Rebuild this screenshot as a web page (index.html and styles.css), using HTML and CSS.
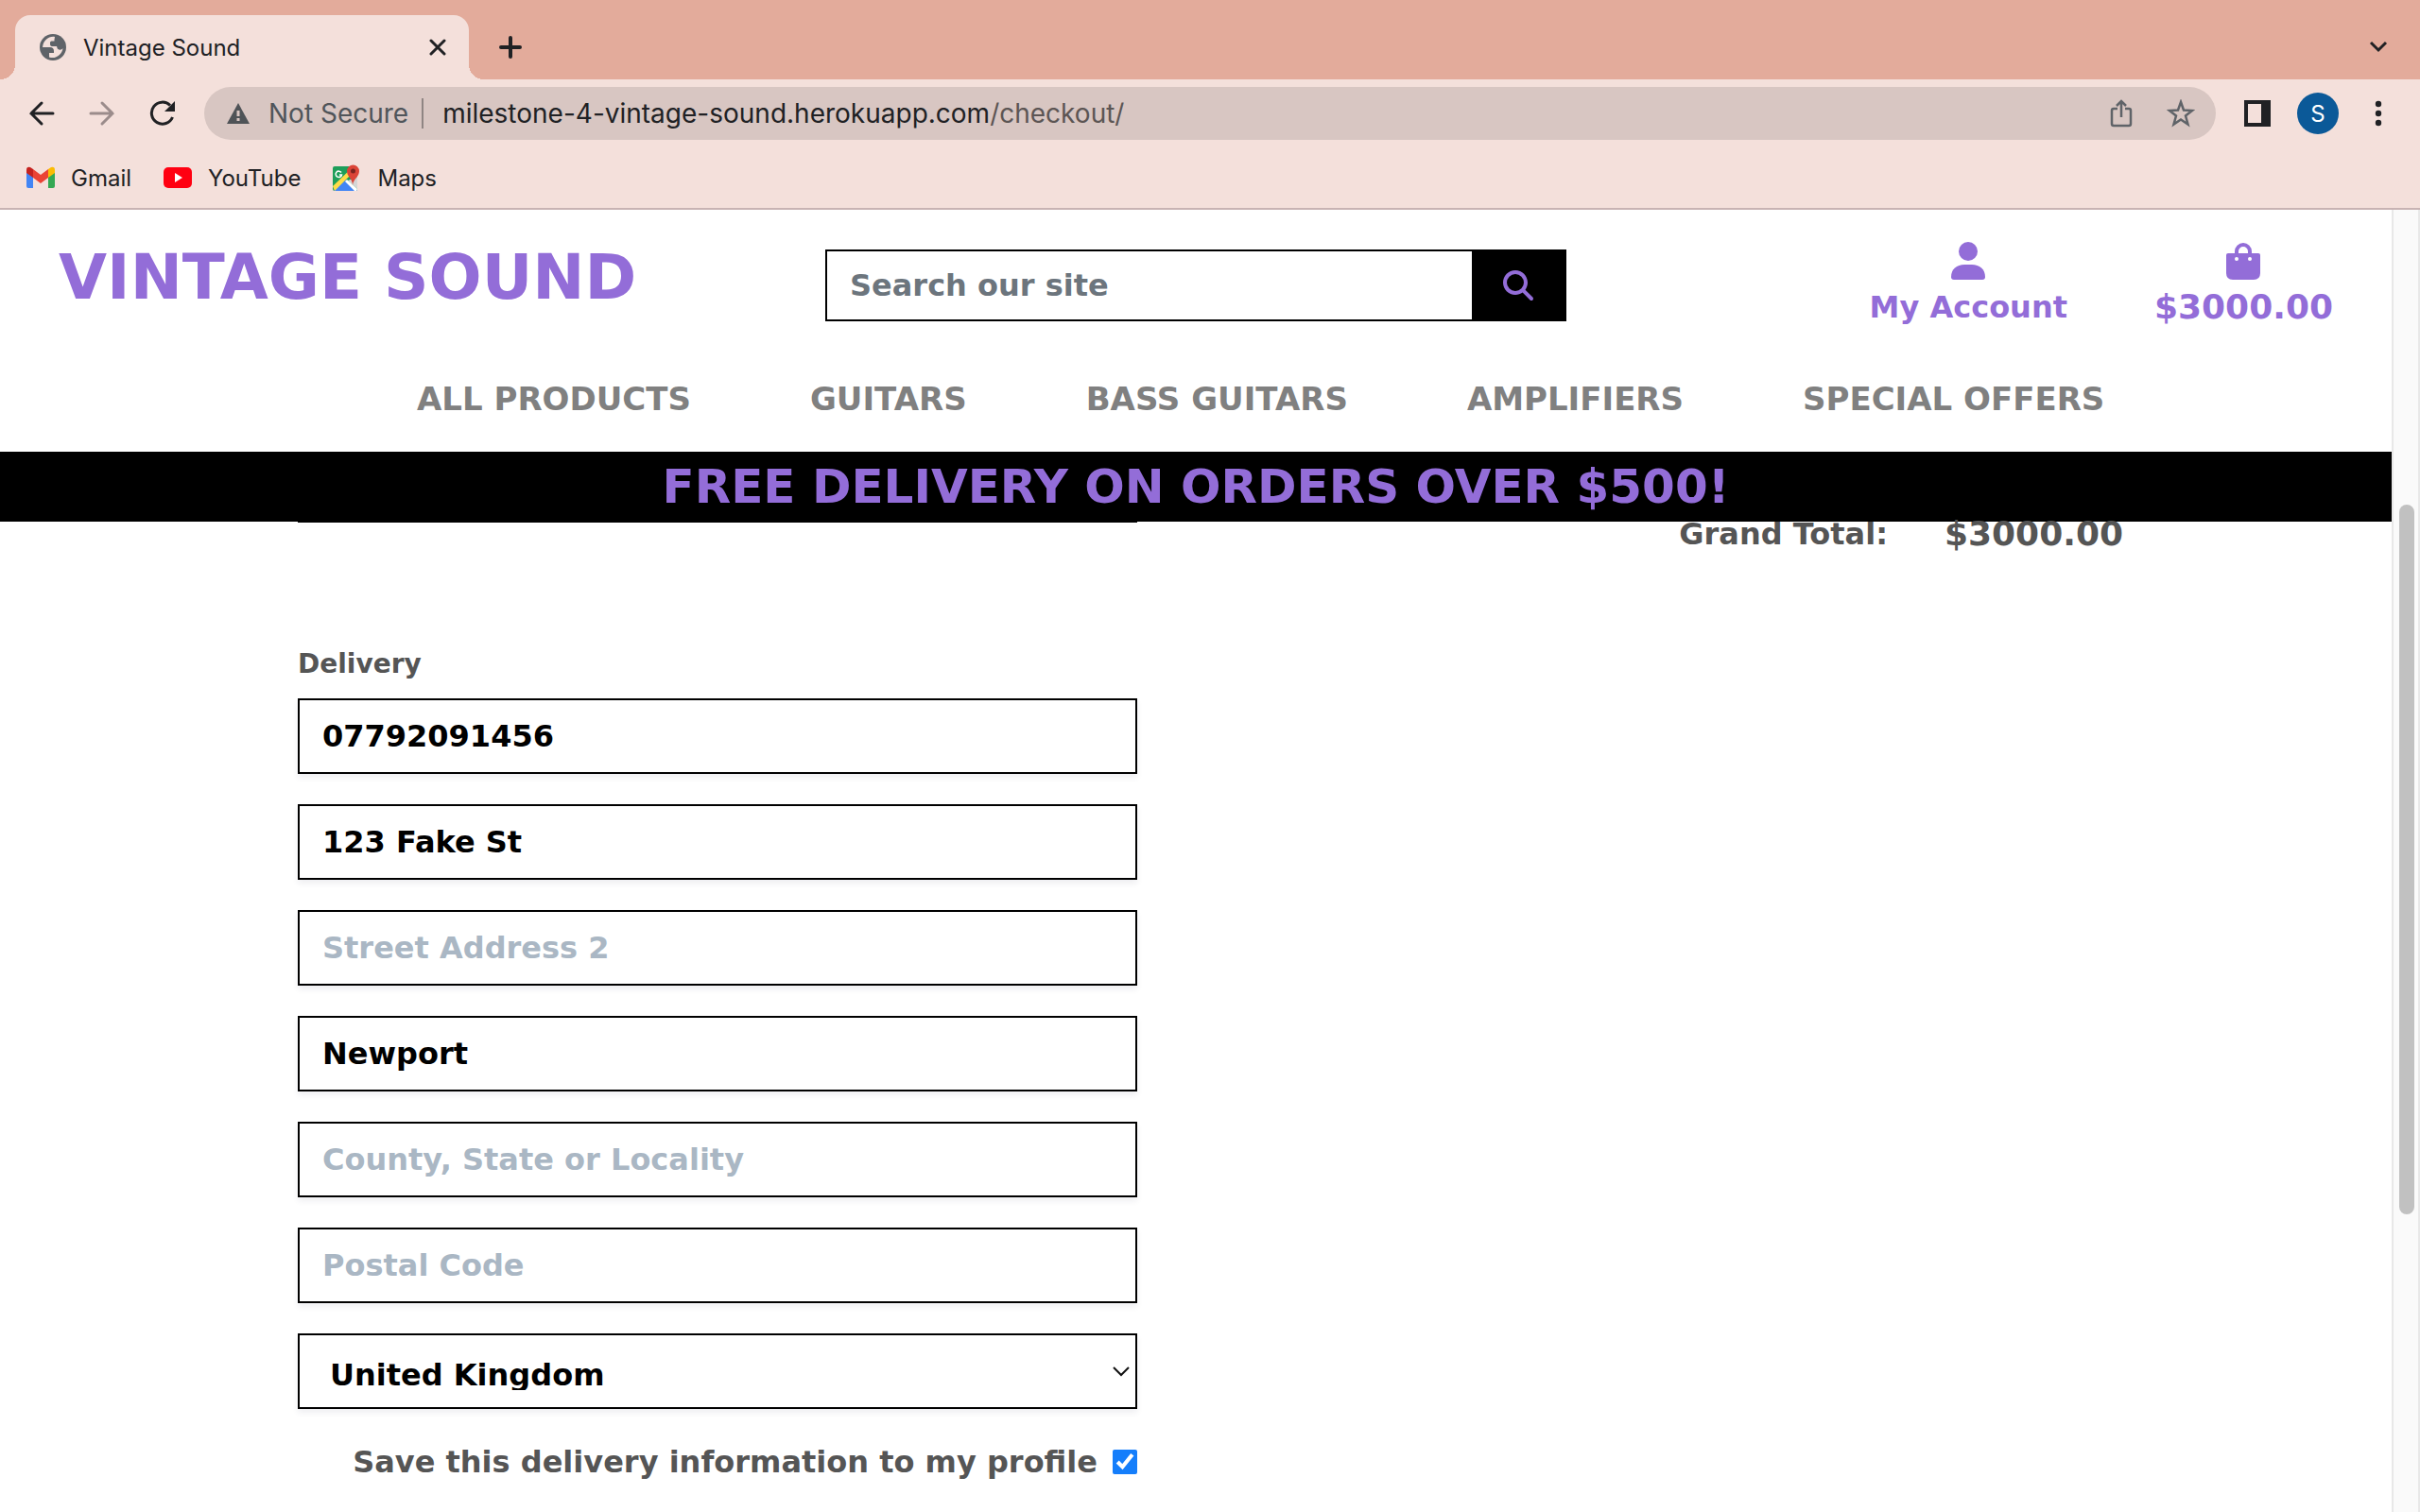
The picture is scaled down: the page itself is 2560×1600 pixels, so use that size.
FILE: index.html
```html
<!DOCTYPE html>
<html lang="en">
<head>
<meta charset="utf-8">
<title>Vintage Sound</title>
<meta name="viewport" content="width=device-width, initial-scale=1">
<link rel="stylesheet" href="styles.css">
</head>
<body>
<div class="window">
  <div class="chrome">
    <div class="tabstrip">
      <div class="tab">
        <svg class="globe" width="28" height="28" viewBox="0 0 28 28" aria-hidden="true"><circle cx="14" cy="14" r="14" fill="#5f6368"/><path d="M16 3C10 2 4 6 3 14h8c2.500 0 4 1.500 4 4v2h-5v4.500c7 2.500 14-3 14.500-9.500-1 1.500-2.500 2-4 1.500-2-.5-2-2-2.500-3.500h-5c-1.500 0-2-1-2-2.500V9c0-1 1-1.500 2-1.500h2.500V6c0-1 .5-2 .5-3z" fill="#f4e0db"/></svg>
        <span class="tab-title">Vintage Sound</span>
        <button class="icon-btn" aria-label="Close tab"><svg width="18" height="18" viewBox="0 0 18 18"><path d="M2 2l14 14M16 2L2 16" stroke="#202124" stroke-width="3" stroke-linecap="round"/></svg></button>
      </div>
      <button class="icon-btn" aria-label="New tab"><svg width="24" height="24" viewBox="0 0 24 24"><path d="M12 2v20M2 12h20" stroke="#202124" stroke-width="4" stroke-linecap="round"/></svg></button>
      <button class="icon-btn tab-search" aria-label="Search tabs"><svg width="20" height="14" viewBox="0 0 20 14"><path d="M2 2l8 8 8-8" fill="none" stroke="#202124" stroke-width="3"/></svg></button>
    </div>
    <div class="toolbar">
      <div class="history">
        <button class="icon-btn" aria-label="Back"><svg width="28" height="28" viewBox="0 0 28 28"><path d="M26 14H3M14 3L3 14l11 11" fill="none" stroke="#202124" stroke-width="3" stroke-linecap="round"/></svg></button>
        <button class="icon-btn" aria-label="Forward"><svg width="28" height="28" viewBox="0 0 28 28"><path d="M2 14h23M14 3l11 11-11 11" fill="none" stroke="#9b8c8b" stroke-width="3" stroke-linecap="round"/></svg></button>
        <button class="icon-btn" aria-label="Reload"><svg width="28" height="28" viewBox="0 0 28 28"><path d="M24.500 18A11.500 11.500 0 1 1 22 5.500" fill="none" stroke="#202124" stroke-width="3"/><path d="M27 1v11H16z" fill="#202124"/></svg></button>
      </div>
      <div class="omnibox">
        <svg width="24" height="24" viewBox="0 0 24 24" aria-hidden="true"><path d="M12 1l12 22H0z" fill="#4f5357"/><path d="M12 9v6M12 17v3" stroke="#d8c6c2" stroke-width="3"/></svg>
        <span class="secure">Not Secure</span>
        <span class="url">milestone-4-vintage-sound.herokuapp.com<span class="path">/checkout/</span></span>
        <button class="icon-btn" aria-label="Share"><svg width="24" height="30" viewBox="0 0 24 30"><path d="M8 10H4q-2 0-2 2v14q0 2 2 2h16q2 0 2-2V12q0-2-2-2h-4M12 19V3M7 7l5-5 5 5" fill="none" stroke="#5f6368" stroke-width="2.500"/></svg></button>
        <button class="icon-btn" aria-label="Bookmark this page"><svg width="30" height="30" viewBox="0 0 30 30"><path d="M15 3l3 8.500 9 .5-7 5.500 2.500 9L15 21.500l-7.500 5 2.500-9L3 12l9-.5z" fill="none" stroke="#5f6368" stroke-width="2.500"/></svg></button>
      </div>
      <button class="icon-btn" aria-label="Side panel"><svg width="28" height="28" viewBox="0 0 28 28"><path d="M0 0h28v28H0zM4 4v20h14V4z" fill="#202124" fill-rule="evenodd"/></svg></button>
      <button class="avatar">S</button>
      <button class="icon-btn" aria-label="Menu"><svg width="8" height="28" viewBox="0 0 8 28"><g fill="#202124"><circle cx="4" cy="4" r="3.200"/><circle cx="4" cy="14" r="3.200"/><circle cx="4" cy="24" r="3.200"/></g></svg></button>
    </div>
    <div class="bookmarks">
      <a href="#"><svg width="30" height="24" viewBox="0 0 30 24" aria-hidden="true"><path d="M0 4l7 5v14H2q-2 0-2-2z" fill="#4285f4"/><path d="M30 4l-7 5v14h5q2 0 2-2z" fill="#34a853"/><path d="M7 3l8 6 8-6v9l-8 6-8-6z" fill="#ea4335"/><path d="M0 4q0-4 4-3l3 2v9L0 7z" fill="#c5221f"/><path d="M30 4q0-4-4-3l-3 2v9l7-5z" fill="#fbbc04"/></svg>Gmail</a>
      <a href="#"><svg width="30" height="22" viewBox="0 0 30 22" aria-hidden="true"><rect width="30" height="22" rx="5" fill="#f01"/><path d="M12 6l8 5-8 5z" fill="#fff"/></svg>YouTube</a>
      <a href="#"><svg width="30" height="30" viewBox="0 0 30 30" aria-hidden="true"><rect y="3" width="26" height="26" rx="2" fill="#1e9e5a"/><path d="M1 29l13-12 12 12z" fill="#4285f4"/><path d="M26 14v13L16 18z" fill="#d5d5d5"/><path d="M0 24L21 4l3 3L2 29z" fill="#ffdc48"/><path d="M15 17l11 10-1 2h-2L13 19z" fill="#fff"/><path d="M9 9.500A3.200 3.200 0 1 0 9.500 12H7" fill="none" stroke="#fff" stroke-width="1.500"/><path d="M21 23c0-7-6-9-6-15a6.500 6.500 0 0 1 13 0c0 6-6 8-7 15z" fill="#db4437"/><circle cx="21.500" cy="8" r="2.500" fill="#7b231e"/></svg>Maps</a>
    </div>
  </div>

  <div class="viewport">
    <div class="page">
      <header class="site-header">
        <div class="header-row">
          <a class="brand" href="#">VINTAGE SOUND</a>
          <form class="search">
            <input class="search-input" type="text" placeholder="Search our site" aria-label="Search our site">
            <button class="search-btn" type="button" aria-label="Search"><svg width="32" height="32" viewBox="0 0 512 512"><path fill="#936dd8" d="M416 208c0 45.900-14.900 88.300-40 122.700L502.600 457.400c12.500 12.500 12.500 32.800 0 45.300s-32.800 12.500-45.300 0L330.700 376c-34.400 25.200-76.800 40-122.700 40C93.100 416 0 322.900 0 208S93.100 0 208 0S416 93.100 416 208zM208 352a144 144 0 1 0 0-288 144 144 0 1 0 0 288z"/></svg></button>
          </form>
          <div class="account">
            <a class="account-link" href="#"><svg width="36" height="40" viewBox="0 0 36 40" aria-hidden="true"><circle cx="18" cy="10" r="10" fill="#936dd8"/><path d="M0 37c0-8 6-13 14-13h8c8 0 14 5 14 13q0 3-3 3H3q-3 0-3-3z" fill="#936dd8"/></svg>My Account</a>
            <a class="account-link amount" href="#"><svg width="36" height="40" viewBox="0 0 36 40" aria-hidden="true"><path d="M11 15V10a7 7 0 0 1 14 0v5" fill="none" stroke="#936dd8" stroke-width="4"/><path d="M2 12h32q2 0 2 2v19q0 7-7 7H7q-7 0-7-7V14q0-2 2-2z" fill="#936dd8"/><circle cx="11" cy="18" r="2" fill="#fff"/><circle cx="25" cy="18" r="2" fill="#fff"/></svg>$3000.00</a>
          </div>
        </div>
        <nav class="nav">
          <a href="#">ALL PRODUCTS</a><a href="#">GUITARS</a><a href="#">BASS GUITARS</a><a href="#">AMPLIFIERS</a><a href="#">SPECIAL OFFERS</a>
        </nav>
        <div class="banner">FREE DELIVERY ON ORDERS OVER $500!</div>
      </header>
      <main class="checkout">
        <form class="form">
          <div class="field-edge"></div>
          <fieldset class="delivery">
            <legend>Delivery</legend>
            <input class="field" type="tel" value="07792091456" aria-label="Phone Number">
            <input class="field" type="text" value="123 Fake St" aria-label="Street Address 1">
            <input class="field" type="text" placeholder="Street Address 2" aria-label="Street Address 2">
            <input class="field" type="text" value="Newport" aria-label="Town or City">
            <input class="field" type="text" placeholder="County, State or Locality" aria-label="County, State or Locality">
            <input class="field" type="text" placeholder="Postal Code" aria-label="Postal Code">
            <div class="select-wrap">
              <select class="field country" aria-label="Country"><option>United Kingdom</option></select>
              <svg class="chevron" width="20" height="12" viewBox="0 0 20 12" aria-hidden="true"><path d="M2 2l8 8 8-8" fill="none" stroke="#111" stroke-width="2"/></svg>
            </div>
          </fieldset>
          <div class="save">
            <label for="save-info">Save this delivery information to my profile</label>
            <input id="save-info" type="checkbox" checked>
          </div>
        </form>
        <div class="totals"><span>Grand Total:</span><strong class="amount">$3000.00</strong></div>
      </main>
    </div>
    <div class="scrollbar"><div class="thumb"></div></div>
  </div>
</div>
</body>
</html>
```
FILE: styles.css
```css
* { box-sizing: border-box; }
body { margin: 0; background: #fff; font-family: "DejaVu Sans", sans-serif; font-weight: 700; }
a { text-decoration: none; color: inherit; }
svg { display: block; flex: none; }
button { border: 0; padding: 0; background: none; font: inherit; }
.window { height: 100vh; display: flex; flex-direction: column; overflow: hidden; }

/* Browser frame */
.chrome { flex: none; background: #f4e0db; border-bottom: 2px solid #c8b3b3; font-family: Inter, sans-serif; font-weight: 400; font-size: 24px; color: #202124; }
.tabstrip { height: 84px; padding: 16px 34px 0 16px; display: flex; align-items: center; background: #e3ab9b; }
.tab { position: relative; width: 480px; height: 68px; padding: 0 24px 0 26px; display: flex; align-items: center; gap: 18px; background: #f4e0db; border-radius: 16px 16px 0 0; margin-right: 32px; }
.tab::before, .tab::after { content: ""; position: absolute; bottom: 0; width: 16px; height: 16px; }
.tab::before { right: 100%; background: radial-gradient(circle at 0 0, #e3ab9b 16px, #f4e0db 16px); }
.tab::after { left: 100%; background: radial-gradient(circle at 100% 0, #e3ab9b 16px, #f4e0db 16px); }
.tab-title { flex: 1; }
.icon-btn { flex: none; display: flex; align-items: center; justify-content: center; }
.tab-search { margin-left: auto; }
.toolbar { height: 72px; padding: 0 40px 0 30px; display: flex; align-items: center; }
.history { display: flex; gap: 36px; margin-right: 30px; }
.omnibox { flex: 1; height: 56px; margin-right: 30px; padding: 0 22px 0 24px; display: flex; align-items: center; gap: 20px; border-radius: 28px; background: #d8c6c2; font-size: 28px; }
.omnibox .icon-btn { margin-left: 16px; }
.secure { color: #50555a; border-right: 2px solid #8f8583; padding-right: 14px; line-height: 32px; }
.url { flex: 1; white-space: nowrap; }
.path { color: #5c5554; }
.avatar { width: 44px; height: 44px; margin: 0 38px 0 28px; border-radius: 50%; background: #0b5998; color: #fff; font-size: 24px; }
.bookmarks { height: 64px; padding: 0 28px; display: flex; align-items: center; gap: 34px; }
.bookmarks a { display: flex; align-items: center; gap: 17px; }

/* Site */
.viewport { flex: 1; min-height: 0; display: flex; }
.page { flex: 1; min-width: 0; overflow: hidden; }
.header-row { height: 156px; padding: 0 62px; display: grid; grid-template-columns: 811px 784px 1fr; align-items: center; }
.brand { color: #936dd8; font-size: 66px; line-height: 76px; padding-bottom: 12px; }
.search { display: flex; height: 76px; margin-top: 4px; border: 2px solid #000; }
.search-input { flex: 1; min-width: 0; border: 0; padding: 0 24px; font: inherit; font-size: 32px; background: #fff; }
.search-input::placeholder { color: #6c757d; opacity: 1; }
.search-btn { width: 98px; background: #000; display: flex; align-items: center; justify-content: center; }
.account { display: flex; justify-content: flex-end; gap: 92px; color: #936dd8; font-size: 32px; line-height: 40px; }
.account-link { display: flex; flex-direction: column; align-items: center; gap: 9px; }
.amount { font-size: 36px; }
.nav { height: 100px; padding-left: 441px; display: flex; align-items: center; gap: 126px; color: #808080; font-size: 34px; white-space: nowrap; padding-bottom: 12px; }
.banner { height: 74px; line-height: 74px; background: #000; color: #936dd8; font-size: 50px; text-align: center; white-space: nowrap; }

.checkout { display: flex; justify-content: space-between; padding: 0 284px 0 315px; color: #555; font-size: 32px; }
.form { width: 888px; }
.field-edge { height: 1px; background: #000; box-shadow: 0 4px 6px rgba(50, 50, 93, .08); }
.delivery { margin: 130px 0 0; padding: 0; border: 0; min-width: 0; display: flex; flex-direction: column; gap: 32px; }
.delivery legend { padding: 0; margin-bottom: 16px; font-size: 28px; line-height: 40px; }
.field { width: 100%; height: 80px; padding: 0 24px; border: 2px solid #000; border-radius: 0; background: #fff; color: #000; font: inherit; font-size: 32px; box-shadow: 0 4px 6px rgba(50, 50, 93, .08); }
.field::placeholder { color: #aab7c4; opacity: 1; }
.select-wrap { position: relative; }
.country { display: block; appearance: none; padding: 24px 32px 16px; line-height: 32px; }
.chevron { position: absolute; right: 7px; top: 34px; }
.save { margin-top: 34px; display: flex; justify-content: flex-end; align-items: center; gap: 16px; line-height: 44px; white-space: nowrap; }
.save input { width: 26px; height: 26px; margin: 0; accent-color: #157efb; }
.totals { display: flex; align-items: flex-start; gap: 60px; line-height: 26px; }

.scrollbar { flex: none; width: 30px; display: flex; flex-direction: column; padding: 0 4px 0 6px; background: #fafafa; border: solid #e8e8e8; border-width: 0 2px; }
.scrollbar::before { content: ""; flex: 312; }
.scrollbar::after { content: ""; flex: 315; }
.thumb { flex: 751; border-radius: 8px; background: #c1c1c1; }
```
